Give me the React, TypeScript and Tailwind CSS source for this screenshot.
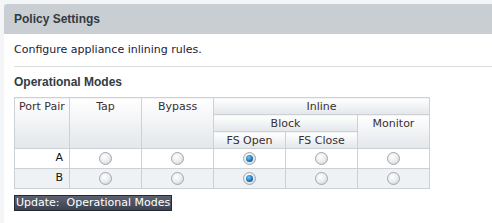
import React from "react";

function Radio({ checked }: { checked?: boolean }) {
  return (
    <span className="inline-flex items-center justify-center w-[13px] h-[13px] rounded-full border border-[#a3a8ae] bg-[radial-gradient(circle_at_40%_35%,#ffffff_0%,#e8eaec_55%,#c8ccd0_100%)] align-middle">
      {checked && (
        <span className="w-[7px] h-[7px] rounded-full bg-[radial-gradient(circle_at_40%_35%,#7cc4ee_0%,#1b78c0_55%,#0b3f73_100%)]" />
      )}
    </span>
  );
}

const headCell =
  "border border-[#ccd1d6] bg-gradient-to-b from-[#ffffff] to-[#e3e7eb] font-normal text-[#3a2f33] align-top pt-[1px] leading-[15px] whitespace-nowrap";

const rows = [
  { name: "A", bg: "bg-white", selected: 2 },
  { name: "B", bg: "bg-[#eff2f5]", selected: 2 },
];

export default function App() {
  return (
    <div className="w-[492px] h-[223px] bg-[#f4f5f6] pt-[4px] pl-[4px] overflow-hidden font-['Liberation_Sans',Arial,sans-serif]">
      <div className="bg-white h-full rounded-tl-[3px]">
        {/* Header */}
        <div className="h-[30px] bg-[#c9ced2] rounded-tl-[3px] flex items-center px-[10px]">
          <h1 className="text-[12px] font-bold text-[#333a40]">Policy Settings</h1>
        </div>

        <div className="pl-[10px]">
          <p className="h-[33px] flex items-center text-[11px] text-[#221a3a] font-['DejaVu_Sans',Verdana,sans-serif] border-b border-[#dcdcdc]">
            Configure appliance inlining rules.
          </p>

          <h2 className="h-[30px] flex items-center text-[12px] font-bold text-[#333a40]">Operational Modes</h2>

          <table className="border-collapse table-fixed w-[415px] text-[11px] font-['DejaVu_Sans',Verdana,sans-serif] text-[#3a2f33]">
            <colgroup>
              <col className="w-[55px]" />
              <col className="w-[72px]" />
              <col className="w-[72px]" />
              <col className="w-[72px]" />
              <col className="w-[72px]" />
              <col className="w-[72px]" />
            </colgroup>
            <thead>
              <tr className="h-[17px]">
                <th rowSpan={3} className={`${headCell} text-left pl-[4px]`}>Port Pair</th>
                <th rowSpan={3} className={`${headCell} text-center`}>Tap</th>
                <th rowSpan={3} className={`${headCell} text-center`}>Bypass</th>
                <th colSpan={3} className={`${headCell} text-center`}>Inline</th>
              </tr>
              <tr className="h-[17px]">
                <th colSpan={2} className={`${headCell} text-center`}>Block</th>
                <th rowSpan={2} className={`${headCell} text-center`}>Monitor</th>
              </tr>
              <tr className="h-[17px]">
                <th className={`${headCell} text-center`}>FS Open</th>
                <th className={`${headCell} text-center`}>FS Close</th>
              </tr>
            </thead>
            <tbody>
              {rows.map((r) => (
                <tr key={r.name} className={`h-[20px] ${r.bg}`}>
                  <td className="border border-[#ccd1d6] text-right pr-[6px] text-[#111]">{r.name}</td>
                  {[0, 1, 2, 3, 4].map((i) => (
                    <td key={i} className="border border-[#ccd1d6] text-center leading-none">
                      <Radio checked={i === r.selected} />
                    </td>
                  ))}
                </tr>
              ))}
            </tbody>
          </table>

          <button className="mt-[1px] h-[16px] px-[1px] bg-gradient-to-b from-[#5b6272] to-[#3c4250] border border-[#262a33] text-white text-[11px] leading-[14px] font-['DejaVu_Sans',Verdana,sans-serif] whitespace-pre">
            {"Update:  Operational Modes"}
          </button>
        </div>
      </div>
    </div>
  );
}
